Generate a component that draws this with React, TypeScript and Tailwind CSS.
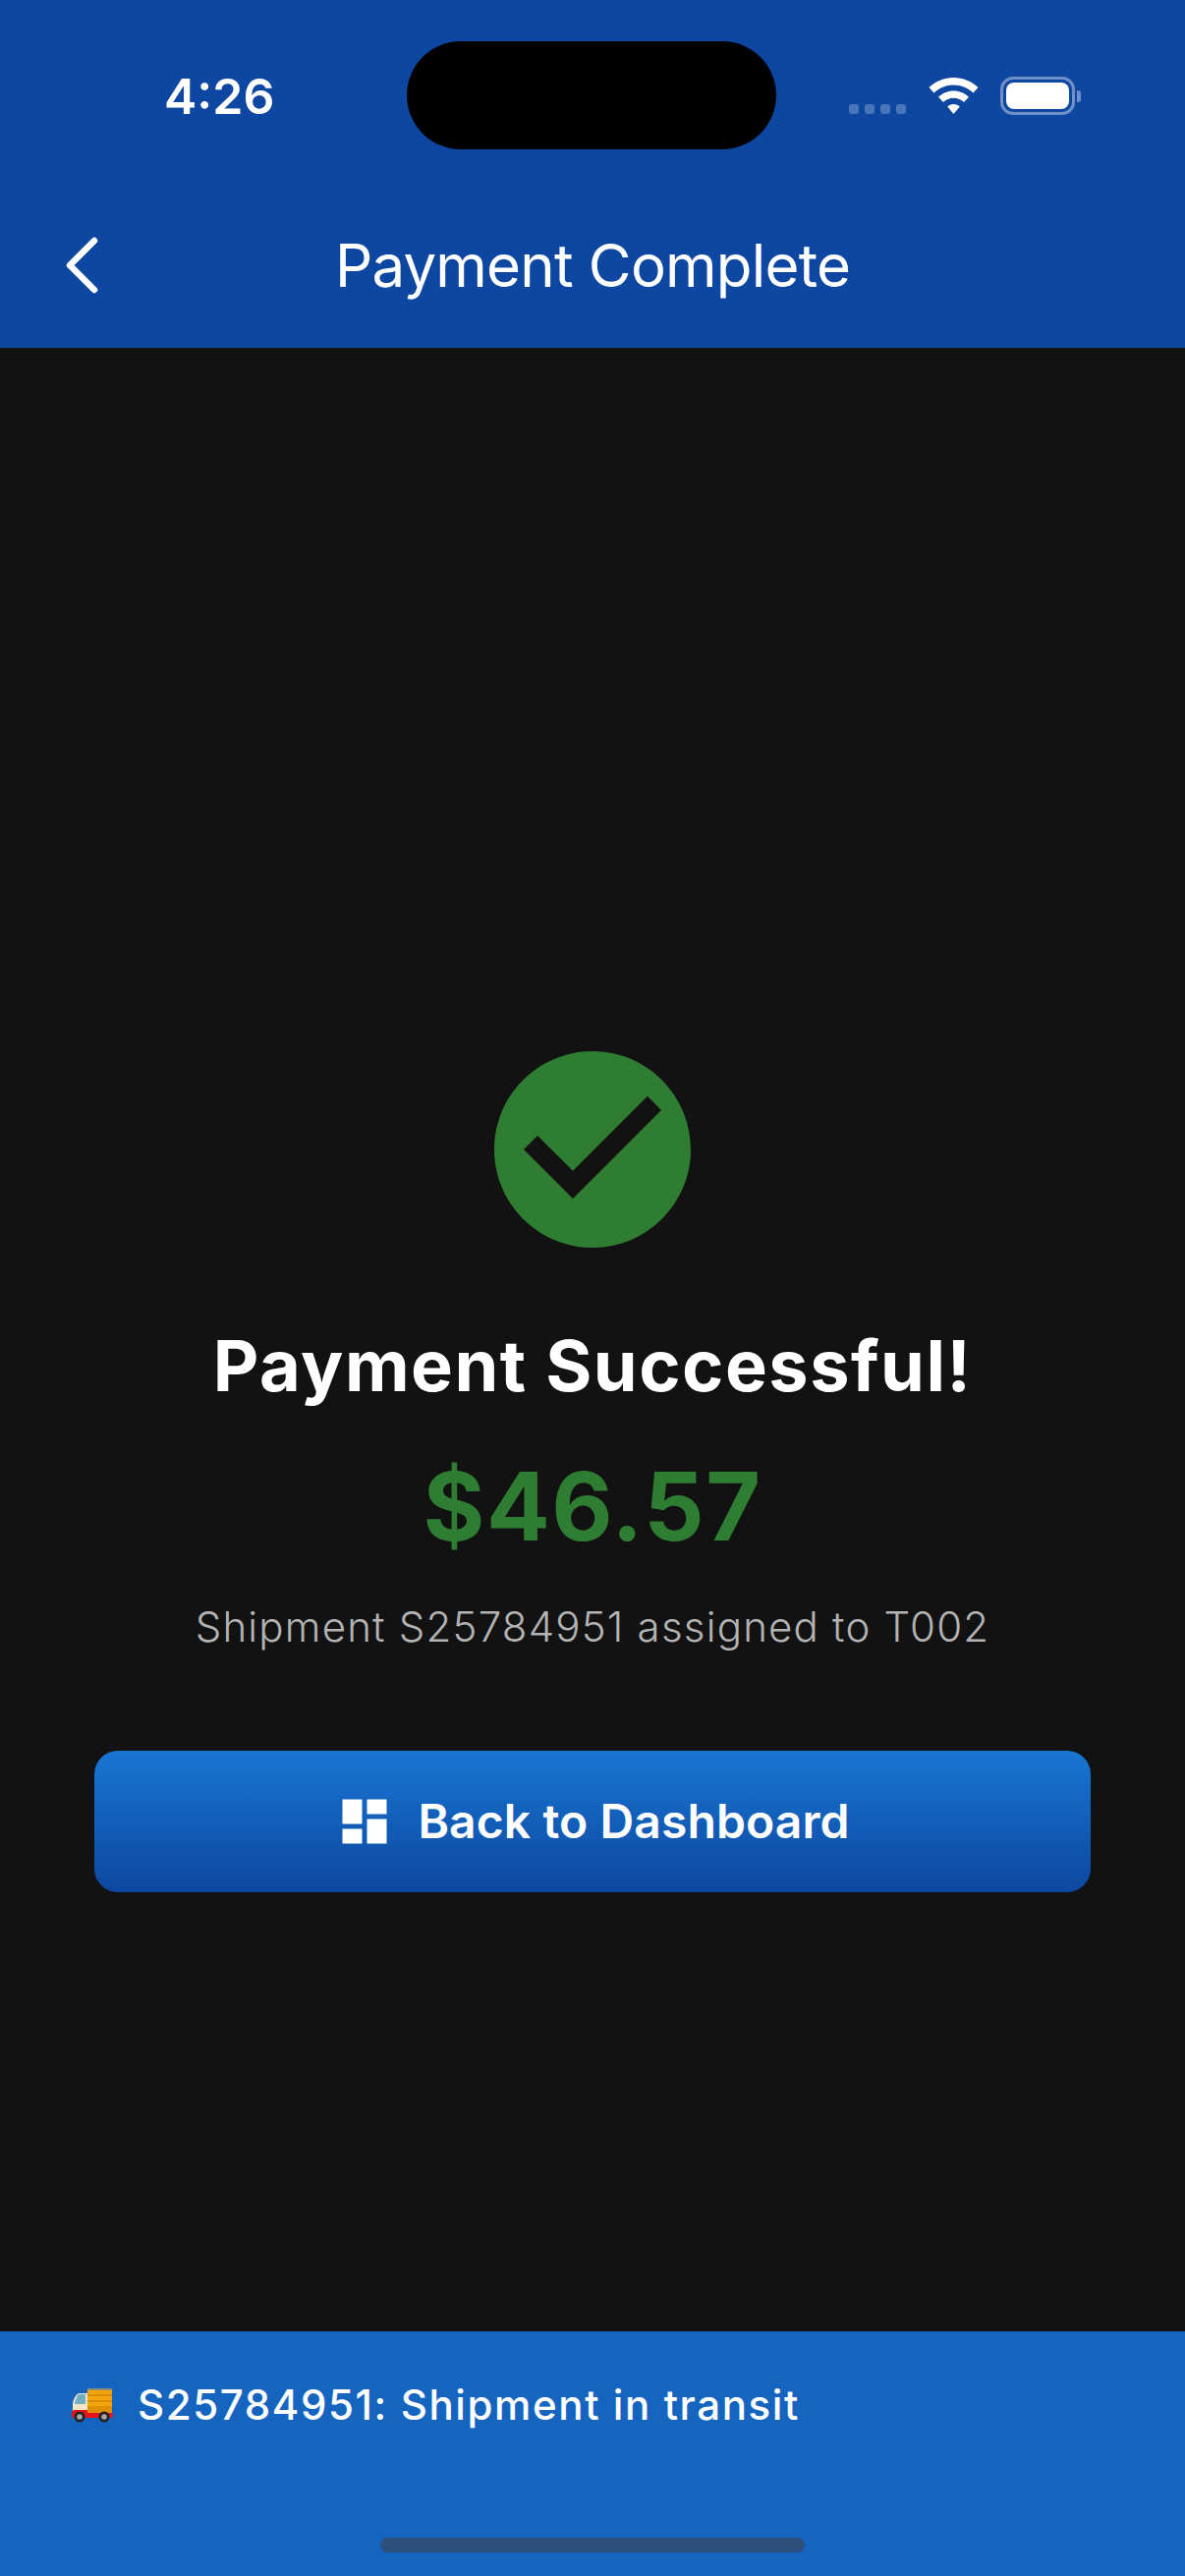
import React from 'react';

const font = "font-['Inter','Liberation_Sans',sans-serif]";

const StatusBar: React.FC = () => (
	<div className="relative flex h-[154px] items-start">
		<span className="ml-[167px] mt-[68px] text-[50px] leading-[60px] font-semibold text-white">
			4:26
		</span>
		{/* dynamic island */}
		<div className="absolute left-[414px] top-[42px] h-[110px] w-[376px] rounded-[55px] bg-black" />
		<div className="ml-auto mr-[106px] mt-[78px] flex items-end">
			<div className="mb-[1px] flex gap-[6px]">
				<div className="h-[10px] w-[10px] rounded-[3px] bg-[#4a74b8]" />
				<div className="h-[10px] w-[10px] rounded-[3px] bg-[#4a74b8]" />
				<div className="h-[10px] w-[10px] rounded-[3px] bg-[#4a74b8]" />
				<div className="h-[10px] w-[10px] rounded-[3px] bg-[#4a74b8]" />
			</div>
			<svg className="ml-[23px]" width="51" height="38" viewBox="0 0 51 38" fill="#fff">
				<path d="M25.5 0C35 0 43.8 3.8 50.5 10L45.5 15.5C40.2 10.5 33.2 7.5 25.5 7.5S10.8 10.5 5.5 15.5L0.5 10C7.2 3.8 16 0 25.5 0Z" />
				<path d="M25.5 13.5C31.5 13.5 37 15.9 41 19.8L36 25C33.3 22.4 29.6 20.8 25.5 20.8S17.7 22.4 15 25L10 19.8C14 15.9 19.5 13.5 25.5 13.5Z" />
				<path d="M25.5 27C28 27 30.2 28 31.8 29.5L25.5 37L19.2 29.5C20.8 28 23 27 25.5 27Z" />
			</svg>
			<div className="ml-[22px] flex items-center">
				<div className="flex h-[39px] w-[76px] items-center justify-center rounded-[13px] border-[3px] border-[#6f90c6]">
					<div className="h-[27px] w-[64px] rounded-[8px] bg-white" />
				</div>
				<div className="ml-[2px] h-[12px] w-[4px] rounded-r-[3px] bg-[#6f90c6]" />
			</div>
		</div>
	</div>
);

const Header: React.FC = () => (
	<div className="h-[354px] shrink-0 bg-[#0D47A1]">
		<StatusBar />
		<div className="relative mt-[49px] flex h-[134px] items-center justify-center">
			<svg
				className="absolute left-[60px] top-[31px]"
				width="48"
				height="72"
				viewBox="0 0 48 72"
				fill="none"
				stroke="#fff"
				strokeWidth="6.500"
				strokeLinecap="round"
				strokeLinejoin="round"
			>
				<path d="M36 11L11 36L36 61" />
			</svg>
			<h1 className="text-[60px] leading-[72px] font-normal tracking-[-0.8px] text-white">
				Payment Complete
			</h1>
		</div>
	</div>
);

const TruckEmoji: React.FC = () => (
	<svg width="42" height="35" viewBox="0 0 42 35" className="shrink-0">
		<rect x="16" y="0" width="25" height="25" fill="#f2a60c" />
		<rect x="16" y="0" width="25" height="2" fill="#8a8f7c" />
		<rect x="16" y="6" width="25" height="2" fill="#d98a05" />
		<rect x="16" y="12" width="25" height="2" fill="#d98a05" />
		<rect x="16" y="18" width="25" height="7" fill="#e08e04" />
		<path d="M16 5H8C5 5 2 10 1 15V24H16Z" fill="#f3e6c8" />
		<path d="M14 6H8C6 6 3.500 11 3 16H14Z" fill="#6fb0c4" />
		<path d="M0 26C0 23 1 22 3 22H16V25H41C42 25 42 30 41 30H1C0 30 0 28 0 26Z" fill="#e5141b" />
		<circle cx="8" cy="29" r="5.500" fill="#222" />
		<circle cx="8" cy="29" r="2.800" fill="#a9a9a9" />
		<circle cx="33" cy="29" r="5.500" fill="#222" />
		<circle cx="33" cy="29" r="2.800" fill="#a9a9a9" />
	</svg>
);

const App: React.FC = () => {
	return (
		<div className={`flex h-[2622px] w-[1206px] flex-col overflow-hidden bg-[#121212] ${font}`}>
			<Header />

			<main className="flex flex-1 flex-col items-center pt-[696px]">
				<svg width="240" height="240" viewBox="0 0 24 24" fill="#2E7D32">
					<path d="M12 2C6.48 2 2 6.48 2 12s4.48 10 10 10 10-4.48 10-10S17.52 2 12 2zm-2 15l-5-5 1.41-1.41L10 14.17l7.59-7.59L19 8l-9 9z" />
				</svg>
				<h2 className="mt-[56px] text-[72px] leading-[88px] font-bold tracking-[1.5px] text-white">
					Payment Successful!
				</h2>
				<p className="mt-[41px] text-[96px] leading-[116px] font-bold tracking-[1.5px] text-[#2E7D32]">
					$46.57
				</p>
				<p className="mt-[39px] text-[42px] leading-[52px] font-light tracking-[1.2px] text-[#b3b3b3]">
					Shipment S25784951 assigned to T002
				</p>
				<button className="mt-[100px] flex h-[144px] w-[1014px] items-center justify-center rounded-[24px] bg-gradient-to-b from-[#1976D2] to-[#0D47A1]">
					<svg width="60" height="60" viewBox="0 0 24 24" fill="#fff">
						<path d="M3 13h8V3H3v10zm0 8h8v-6H3v6zm10 0h8V11h-8v10zm0-18v6h8V3h-8z" />
					</svg>
					<span className="ml-[24px] text-[48px] leading-[58px] font-semibold tracking-[0.1px] text-white">
						Back to Dashboard
					</span>
				</button>
			</main>

			<footer className="relative h-[249px] shrink-0 bg-[#1565C0]">
				<div className="flex items-center pl-[73px] pt-[49px]">
					<TruckEmoji />
					<span className="ml-[25px] text-[42px] leading-[52px] font-medium tracking-[1.6px] text-white">
						S25784951: Shipment in transit
					</span>
				</div>
				{/* home indicator */}
				<div className="absolute bottom-[24px] left-[387px] h-[15px] w-[432px] rounded-full bg-[#2d4f7c]" />
			</footer>
		</div>
	);
};

export default App;
